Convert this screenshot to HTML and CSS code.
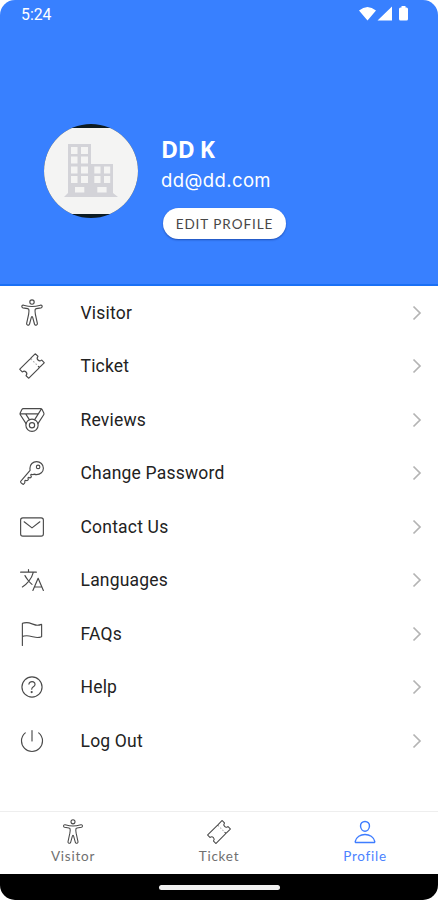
FILE: index.html
```html
<!DOCTYPE html>
<html lang="en">
<head>
<meta charset="utf-8">
<title>Profile</title>
<link rel="stylesheet" href="styles.css">
</head>
<body>
<svg class="defs" aria-hidden="true">
  <symbol id="body" viewBox="0 0 512 512"><circle cx="256" cy="56" r="40"/><path d="M194 280L158 446a27 27 0 0021 32 27 27 0 0032-21l30-112s4-22 15-22 15 22 15 22l30 112a27 27 0 0032 21 27 27 0 0021-32L318 280c-6-32-10-66-4-88 3-9 12-14 22-16l86-14a25 25 0 0019-30 25 25 0 00-30-19s-92 25-155 25-155-25-155-25a25 25 0 00-30 19 25 25 0 0019 30l86 14c10 2 19 7 22 16 6 22 2 56-4 88z"/></symbol>
  <symbol id="ticket" viewBox="0 0 512 512"><path d="M366.050 146a46.700 46.700 0 01-2.420-63.420 3.870 3.870 0 00-.22-5.260l-44.130-44.180a3.890 3.890 0 00-5.500 0l-70.340 70.340a23.620 23.620 0 00-5.710 9.240 23.660 23.660 0 01-14.950 15 23.700 23.700 0 00-9.250 5.710L33.140 313.780a3.890 3.890 0 000 5.500l44.130 44.130a3.870 3.870 0 005.260.22 46.690 46.690 0 0165.840 65.840 3.870 3.870 0 00.22 5.260l44.130 44.130a3.890 3.890 0 005.500 0l180.400-180.390a23.700 23.700 0 005.710-9.250 23.660 23.660 0 0114.950-15 23.620 23.620 0 009.240-5.710l70.340-70.340a3.890 3.890 0 000-5.500l-44.130-44.130a3.870 3.870 0 00-5.260-.22 46.700 46.700 0 01-63.420-2.320z"/><path class="faint" d="M250.500 140.440L234 123.930M294.520 184.460l-11-11M338.540 228.490l-11-11"/><path d="M388.070 278l-16.510-16.510"/></symbol>
  <symbol id="medal" viewBox="0 0 512 512"><circle cx="256" cy="352" r="112"/><circle cx="256" cy="352" r="48"/><path d="M147 323L41.840 159.320a32 32 0 01-1.700-31.610l31-62A32 32 0 0199.780 48h312.440a32 32 0 0128.620 17.690l31 62a32 32 0 01-1.700 31.610L365 323M371 144H37M428.740 52.600L305 250M140.550 144L207 250"/></symbol>
  <symbol id="key" viewBox="0 0 512 512"><path d="M218.100 167.170c0 13 0 25.600 4.100 37.400-43.100 50.600-156.900 184.300-167.500 194.500a20.170 20.170 0 00-6.700 15c0 8.500 5.200 16.700 9.600 21.300 6.600 6.900 34.800 33 40 28 15.400-15 18.500-19 24.800-25.200 9.500-9.300-1-28.300 2.300-36s6.800-9.200 12.500-10.400 15.800 2.900 23.700 3c8.300.1 12.800-3.400 19-9.200 5-4.600 8.600-8.900 8.700-15.600.2-9-12.800-20.900-3.100-30.400s23.700 6.200 34 5 22.800-15.500 24.100-21.600-11.700-21.800-9.700-30.700c.7-3 6.800-10 11.400-11s25 6.900 29.600 5.900c5.600-1.200 12.100-7.100 17.400-10.400 15.500 6.700 29.600 9.400 47.700 9.400 68.500 0 124-53.400 124-119.200S408.500 48 340 48s-121.900 53.370-121.900 119.170zM400 144a32 32 0 11-32-32 32 32 0 0132 32z"/></symbol>
  <symbol id="mail" viewBox="0 0 512 512"><rect x="48" y="90" width="416" height="332" rx="40"/><path d="M112 160l144 112 144-112"/></symbol>
  <symbol id="lang" viewBox="0 0 512 512"><path d="M48 112h288M192 64v48M272 448l96-224 96 224M301.500 384h133M281.300 112S257 206 199 277 80 384 80 384M256 336s-35-27-72-75-56-85-56-85"/></symbol>
  <symbol id="flag" viewBox="0 0 512 512"><path d="M80 464V68.140a8 8 0 014-6.900C91.810 56.660 112.920 48 160 48c64 0 145 48 192 48a199.530 199.530 0 0077.230-15.770 2 2 0 012.770 1.850v219.360a4 4 0 01-2.390 3.650C421.370 308.700 392.330 320 352 320c-48 0-128-32-192-32s-80 16-80 16"/></symbol>
  <symbol id="help" viewBox="0 0 512 512"><circle cx="256" cy="256" r="184"/><path d="M200 202.290s.84-17.500 19.570-32.570C230.680 160.770 244 158.180 256 158c10.930-.14 20.690 1.670 26.530 4.450 10 4.760 29.470 16.380 29.470 41.090 0 26-17 37.810-36.370 50.800S251 281.430 251 296"/><circle class="dot" cx="250" cy="348" r="20"/></symbol>
  <symbol id="power" viewBox="0 0 512 512"><path d="M378 108a191.410 191.410 0 0170 148c0 106-86 192-192 192S64 362 64 256a192 192 0 0169-148M256 64v192"/></symbol>
  <symbol id="person" viewBox="0 0 512 512"><path d="M344 144c-3.920 52.870-44 96-88 96s-84.150-43.120-88-96c-4-55 35-96 88-96s92 42 88 96zM256 304c-87 0-175.300 48-191.640 138.600C62.390 453.520 68.570 464 80 464h352c11.440 0 17.620-10.480 15.650-21.400C431.300 352 343 304 256 304z"/></symbol>
  <symbol id="chev" viewBox="0 0 10 16"><path d="M1.500 1.500L8 8l-6.500 6.500"/></symbol>
</svg>
<div class="phone">
  <header class="hero">
    <div class="status">
      <span class="time">5:24</span>
      <svg class="signals" viewBox="0 0 52 18" width="52" height="18"><path d="M0 5.500Q8.500-1.500 17 5.500L8.500 15.500zM18.500 15.500L33 1.500V15.500zM40 4q0-1.500 1.500-1.500h1V1h4v1.500h1Q49 2.500 49 4v10q0 1.500-1.500 1.500h-6Q40 15.500 40 14z"/></svg>
    </div>
    <div class="user">
      <div class="avatar">
        <svg viewBox="0 0 94 94" width="94" height="94"><path fill="#f4f4f3" d="M0 4h94v86H0z"/><path fill="#d3d3d8" d="M24 20h23v20h22v29l5 4H20l4-4z"/><path fill="#f4f4f3" d="M27 23h6.500v7H27zM37 23h7v7h-7zM27 32.500h6.500v7H27zM37 32.500h7v7h-7zM27 42.500h6.500v7H27zM37 42.500h7v7h-7zM27 52h6.500v7H27zM37 52h7v7h-7zM50.300 42.500h6.200v7h-6.200zM60 42.500h6.200v7H60zM50.300 52h6.200v7h-6.200zM60 52h6.200v7H60zM31 63h9.300v5.500H31zM53.300 63h9.300v5.500h-9.300z"/></svg>
      </div>
      <div class="info">
        <div class="name">DD K</div>
        <div class="email">dd@dd.com</div>
        <button class="edit">EDIT PROFILE</button>
      </div>
    </div>
  </header>
  <main class="menu">
    <div class="row"><svg class="icon"><use href="#body"/></svg><span class="label">Visitor</span><svg class="chev"><use href="#chev"/></svg></div>
    <div class="row"><svg class="icon"><use href="#ticket"/></svg><span class="label">Ticket</span><svg class="chev"><use href="#chev"/></svg></div>
    <div class="row"><svg class="icon"><use href="#medal"/></svg><span class="label">Reviews</span><svg class="chev"><use href="#chev"/></svg></div>
    <div class="row"><svg class="icon"><use href="#key"/></svg><span class="label">Change Password</span><svg class="chev"><use href="#chev"/></svg></div>
    <div class="row"><svg class="icon"><use href="#mail"/></svg><span class="label">Contact Us</span><svg class="chev"><use href="#chev"/></svg></div>
    <div class="row"><svg class="icon"><use href="#lang"/></svg><span class="label">Languages</span><svg class="chev"><use href="#chev"/></svg></div>
    <div class="row"><svg class="icon"><use href="#flag"/></svg><span class="label">FAQs</span><svg class="chev"><use href="#chev"/></svg></div>
    <div class="row"><svg class="icon"><use href="#help"/></svg><span class="label">Help</span><svg class="chev"><use href="#chev"/></svg></div>
    <div class="row"><svg class="icon"><use href="#power"/></svg><span class="label">Log Out</span><svg class="chev"><use href="#chev"/></svg></div>
  </main>
  <nav class="tabs">
    <div class="tab"><svg class="icon"><use href="#body"/></svg><span>Visitor</span></div>
    <div class="tab"><svg class="icon"><use href="#ticket"/></svg><span>Ticket</span></div>
    <div class="tab active"><svg class="icon"><use href="#person"/></svg><span>Profile</span></div>
  </nav>
  <div class="homebar"><div class="pill"></div></div>
</div>
</body>
</html>
```
FILE: styles.css
```css
* { box-sizing: border-box; }
body { margin: 0; background: #fff; }
.defs { display: none; }
.phone { width: 438px; height: 900px; display: flex; flex-direction: column; overflow: hidden; border-radius: 15px; background: #fff; font-family: Roboto, sans-serif; }
.hero { height: 286px; flex: none; background: #3880ff; border-bottom: 2px solid #1a70f5; color: #fff; }
.status { height: 29px; padding: 0 27px 0 21px; display: flex; align-items: center; justify-content: space-between; }
.time { font-size: 15.8px; }
.signals { fill: #fff; margin-top: -2px; }
.user { display: flex; padding: 95px 0 0 44px; }
.avatar { width: 94px; height: 94px; border-radius: 50%; overflow: hidden; background: #0c1b22; }
.avatar svg { display: block; }
.info { margin-left: 23px; padding-top: 9px; font-family: Lato, sans-serif; }
.name { font-family: "Open Sans", sans-serif; font-size: 23px; line-height: 32px; font-weight: 700; letter-spacing: -0.4px; }
.email { font-family: Inter, sans-serif; font-size: 18.5px; line-height: 30px; letter-spacing: 0.4px; }
.edit { display: block; margin: 13px 0 0 2px; width: 123px; height: 31px; padding: 0; border: 0; border-radius: 16px; background: #fff; color: #484848; font: 13.5px Lato, sans-serif; letter-spacing: 0.95px; box-shadow: 0 1px 2px rgba(0, 20, 90, .45); }
.menu { flex: 1; }
.row { height: 53.5px; display: flex; align-items: center; padding: 0 16.5px 0 17.5px; }
.icon { width: 28px; height: 28px; flex: none; fill: none; stroke: #4a4a4a; stroke-width: 21; stroke-linecap: round; stroke-linejoin: round; }
.dot { fill: #4a4a4a; stroke: none; }
.faint { opacity: .4; }
.label { flex: 1; margin-left: 35px; font-size: 17.5px; color: #222; letter-spacing: 0.2px; }
.chev { width: 10px; height: 16px; fill: none; stroke: #b4b4b4; stroke-width: 1.7; }
.tabs { height: 63px; flex: none; display: grid; grid-template-columns: repeat(3, 1fr); border-top: 1px solid #eee; }
.tab { display: flex; flex-direction: column; align-items: center; padding-top: 7px; font: 13.5px/16px Lato, sans-serif; letter-spacing: 0.75px; color: #707070; }
.tab .icon { width: 26px; height: 26px; margin-bottom: 3px; }
.tab.active { color: #4b83ff; }
.tab.active .icon { stroke: #3f7dff; stroke-width: 28; }
.homebar { height: 26px; flex: none; background: #000; display: flex; justify-content: center; padding-top: 11px; }
.pill { width: 121px; height: 5px; border-radius: 3px; background: #f0f0f0; }
```
